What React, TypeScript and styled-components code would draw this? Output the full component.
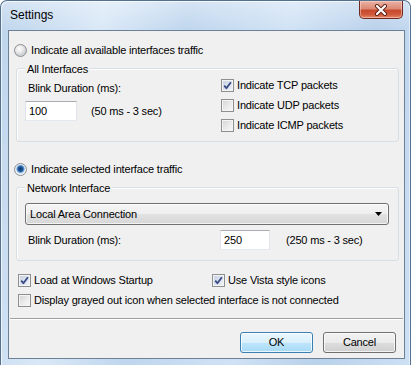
import React from 'react';
import styled, { createGlobalStyle } from 'styled-components';

const GlobalStyle = createGlobalStyle`
  html, body {
    margin: 0;
    padding: 0;
    background: #ffffff;
  }
  body {
    font-family: "Liberation Sans", Arial, sans-serif;
  }
`;

const Window = styled.div`
  width: 411px;
  height: 365px;
  box-sizing: border-box;
  display: flex;
  flex-direction: column;
  border: 1px solid #53708f;
  border-bottom: none;
  border-radius: 7px 7px 0 0;
  background:
    linear-gradient(180deg, rgba(255, 255, 255, 0.35) 0px, rgba(255, 255, 255, 0) 30px),
    linear-gradient(100deg, #bdd4ec 0%, #d9e8f7 22%, #bfd6ee 40%, #d0e2f5 62%, #b9d1eb 80%, #cde0f4 100%);
  box-shadow: inset 1px 1px 0 rgba(255, 255, 255, 0.7), inset -1px 0 0 rgba(255, 255, 255, 0.5);
  overflow: hidden;
`;

const TitleBar = styled.div`
  height: 29px;
  display: flex;
  justify-content: space-between;
  align-items: flex-start;
  flex-shrink: 0;
`;

const Title = styled.div`
  padding-left: 9px;
  font-size: 12px;
  line-height: 29px;
  color: #000;
`;

const CloseButton = styled.div`
  width: 44px;
  height: 18px;
  margin-right: 7px;
  box-sizing: border-box;
  border: 1px solid #6e2a20;
  border-top: none;
  border-radius: 0 0 5px 5px;
  background: linear-gradient(180deg, #eab2a4 0%, #dc8a76 45%, #c7492e 55%, #d0593b 80%, #e58a6b 100%);
  box-shadow: inset 0 0 0 1px rgba(255, 220, 210, 0.5);
  display: flex;
  align-items: center;
  justify-content: center;
`;

const Client = styled.div`
  flex: 1;
  margin: 0 5px 6px 7px;
  border: 1px solid #6d8196;
  background: #f0f0f0;
  display: flex;
  flex-direction: column;
  font-size: 11px;
  letter-spacing: -0.18px;
  color: #000;
`;

const OptionRow = styled.div<{ $top: number }>`
  height: 15px;
  margin: ${p => p.$top}px 0 0 5px;
  display: flex;
  align-items: center;
  gap: 4px;
  line-height: 15px;
`;

const RadioMark = styled.span<{ $checked?: boolean }>`
  width: 13px;
  height: 13px;
  box-sizing: border-box;
  border-radius: 50%;
  border: 1px solid #8b8e92;
  flex-shrink: 0;
  background: ${p =>
    p.$checked
      ? 'radial-gradient(circle at 50% 45%, #0c3464 0, #245c9e 2.5px, #7fb4e4 3.8px, #dfe9f3 4.4px, #f7f7f7 6px)'
      : 'radial-gradient(circle at 40% 35%, #ffffff 0, #e6e6e6 4px, #cfd1d4 6px)'};
`;

const Group = styled.div`
  width: 383px;
  height: 74px;
  box-sizing: border-box;
  margin: 10px 0 0 7px;
  border: 1px solid #d5dfe5;
  border-radius: 3px;
  box-shadow: inset 1px 1px 0 #ffffff;
  display: flex;
  flex-direction: column;
`;

const Legend = styled.div`
  align-self: flex-start;
  margin: -6px 0 0 8px;
  padding: 0 2px;
  line-height: 13px;
  background: #f0f0f0;
`;

const GroupBody = styled.div`
  display: flex;
  padding-left: 8px;
`;

const LeftColumn = styled.div`
  width: 196px;
  display: flex;
  flex-direction: column;
  padding-top: 6px;
`;

const RightColumn = styled.div`
  display: flex;
  flex-direction: column;
  margin-top: -1px;
`;

const Label = styled.div<{ $width?: number; $left?: number }>`
  line-height: 13px;
  margin-left: ${p => p.$left ?? 0}px;
  flex: ${p => (p.$width ? `0 0 ${p.$width}px` : '0 0 auto')};
  white-space: nowrap;
`;

const InputRow = styled.div<{ $top: number }>`
  display: flex;
  align-items: center;
  margin-top: ${p => p.$top}px;
`;

const TextBox = styled.div<{ $width: number }>`
  width: ${p => p.$width}px;
  height: 20px;
  box-sizing: border-box;
  padding-left: 3px;
  background: #ffffff;
  border: 1px solid #e2e3ea;
  border-top-color: #abadb3;
  border-bottom-color: #e3e9ef;
  line-height: 18px;
  flex-shrink: 0;
`;

const Hint = styled.div<{ $gap: number }>`
  margin-left: ${p => p.$gap}px;
  white-space: nowrap;
`;

const CheckRow = styled.div<{ $width?: number }>`
  height: 20px;
  display: flex;
  align-items: center;
  gap: 3px;
  white-space: nowrap;
  flex: ${p => (p.$width ? `0 0 ${p.$width}px` : '0 0 auto')};
`;

const CheckBoxMark = styled.span<{ $checked?: boolean }>`
  width: 13px;
  height: 13px;
  box-sizing: border-box;
  border: 1px solid #8e8f8f;
  flex-shrink: 0;
  display: flex;
  align-items: center;
  justify-content: center;
  background: ${p =>
    p.$checked
      ? 'linear-gradient(135deg, #c5cfe2 0%, #e0e6f1 60%, #f0f3f8 100%)'
      : 'linear-gradient(135deg, #d2d2d2 0%, #ebebeb 55%, #f8f8f8 100%)'};
  box-shadow: inset 0 0 0 1px #f4f4f4;
`;

const OptionsLine = styled.div<{ $top: number }>`
  display: flex;
  margin: ${p => p.$top}px 0 0 9px;
`;

const ComboBox = styled.div`
  width: 364px;
  height: 22px;
  box-sizing: border-box;
  margin: 8px 0 0 8px;
  padding: 0 6px 0 4px;
  border: 1px solid #707070;
  border-radius: 3px;
  background: linear-gradient(180deg, #f5f5f5 0%, #eeeeee 50%, #e2e2e2 51%, #d6d6d6 100%);
  box-shadow: inset 0 0 0 1px rgba(255, 255, 255, 0.7);
  display: flex;
  align-items: center;
  justify-content: space-between;
`;

const Separator = styled.div`
  margin: 8px 1px 0;
  height: 0;
  border-top: 1px solid #a0a0a0;
  border-bottom: 1px solid #ffffff;
`;

const ButtonRow = styled.div`
  display: flex;
  justify-content: flex-end;
  gap: 10px;
  margin-top: 12px;
  padding-right: 8px;
`;

const Button = styled.div<{ $default?: boolean }>`
  width: 73px;
  height: 21px;
  box-sizing: border-box;
  border: 1px solid ${p => (p.$default ? '#3c7fb1' : '#707070')};
  border-radius: 3px;
  background: ${p =>
    p.$default
      ? 'linear-gradient(180deg, #eaf6fd 0%, #d9f0fc 50%, #bee6fd 51%, #a7d9f5 100%)'
      : 'linear-gradient(180deg, #f2f2f2 0%, #ebebeb 50%, #dddddd 51%, #cfcfcf 100%)'};
  box-shadow: inset 0 0 0 1px rgba(255, 255, 255, 0.75);
  display: flex;
  align-items: center;
  justify-content: center;
  line-height: 13px;
`;

const Radio = ({ checked, children, top }: { checked?: boolean; children: React.ReactNode; top: number }) => (
  <OptionRow $top={top}>
    <RadioMark $checked={checked} />
    <span>{children}</span>
  </OptionRow>
);

const Check = ({ checked, children, width }: { checked?: boolean; children: React.ReactNode; width?: number }) => (
  <CheckRow $width={width}>
    <CheckBoxMark $checked={checked}>
      {checked && (
        <svg width="9" height="9" viewBox="0 0 9 9">
          <path d="M1.2 4.6 L3.4 7.2 L7.9 1.2" fill="none" stroke="#3b4f86" strokeWidth="1.9" strokeLinejoin="round" />
        </svg>
      )}
    </CheckBoxMark>
    <span>{children}</span>
  </CheckRow>
);

const App: React.FC = () => {
  return (
    <>
      <GlobalStyle />
      <Window>
        <TitleBar>
          <Title>Settings</Title>
          <CloseButton>
            <svg width="14" height="12" viewBox="0 0 14 12">
              <path d="M3 2 L11 10 M11 2 L3 10" stroke="#5a2018" strokeWidth="4" strokeLinecap="round" />
              <path d="M3 2 L11 10 M11 2 L3 10" stroke="#ffffff" strokeWidth="2.2" strokeLinecap="round" />
            </svg>
          </CloseButton>
        </TitleBar>
        <Client>
          <Radio top={12}>Indicate all available interfaces traffic</Radio>
          <Group>
            <Legend>All Interfaces</Legend>
            <GroupBody>
              <LeftColumn>
                <Label $left={3}>Blink Duration (ms):</Label>
                <InputRow $top={6}>
                  <TextBox $width={52}>100</TextBox>
                  <Hint $gap={14}>(50 ms - 3 sec)</Hint>
                </InputRow>
              </LeftColumn>
              <RightColumn>
                <Check checked>Indicate TCP packets</Check>
                <Check>Indicate UDP packets</Check>
                <Check>Indicate ICMP packets</Check>
              </RightColumn>
            </GroupBody>
          </Group>
          <Radio top={20} checked>Indicate selected interface traffic</Radio>
          <Group>
            <Legend>Network Interface</Legend>
            <ComboBox>
              <span>Local Area Connection</span>
              <svg width="7" height="4" viewBox="0 0 7 4">
                <path d="M0 0 H7 L3.5 4 Z" fill="#000" />
              </svg>
            </ComboBox>
            <InputRow $top={5}>
              <Label $left={11} $width={192}>Blink Duration (ms):</Label>
              <TextBox $width={50}>250</TextBox>
              <Hint $gap={16}>(250 ms - 3 sec)</Hint>
            </InputRow>
          </Group>
          <OptionsLine $top={9}>
            <Check checked width={194}>Load at Windows Startup</Check>
            <Check checked>Use Vista style icons</Check>
          </OptionsLine>
          <OptionsLine $top={0}>
            <Check>Display grayed out icon when selected interface is not connected</Check>
          </OptionsLine>
          <Separator />
          <ButtonRow>
            <Button $default>OK</Button>
            <Button>Cancel</Button>
          </ButtonRow>
        </Client>
      </Window>
    </>
  );
};

export default App;
